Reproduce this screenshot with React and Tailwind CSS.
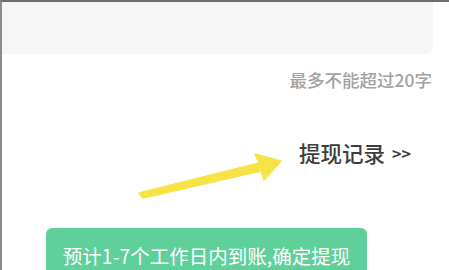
import React from 'react';

const cjk = { fontFamily: '"Noto Sans CJK SC", "Noto Sans", sans-serif' };

function Arrow() {
  // yellow annotation arrow pointing at the record link
  return (
    <svg className="absolute left-0 top-0" width="449" height="270" viewBox="0 0 449 270">
      <polygon
        points="137,191 257,161 253,152 279,159 262,178 259,169 141,196"
        fill="#f6e447"
        stroke="#f6e447"
        strokeWidth="1.5"
        strokeLinejoin="round"
      />
    </svg>
  );
}

export default function App() {
  return (
    <div
      className="relative w-[449px] h-[270px] overflow-hidden bg-white border-t-2 border-l-2 border-t-[#6e6e6e] border-l-[#8c8c8c]"
      style={cjk}
    >
      <div className="h-[52px] mr-[16px] bg-[#f6f6f6] rounded-br-lg" />

      <div className="mt-[14px] pr-[17px] text-right text-[17.5px] leading-[24px] font-medium text-[#a2a2a2]">
        最多不能超过20字
      </div>

      <div className="mt-[47px] pr-[38px] flex justify-end items-center h-[28px]">
        <span className="text-[21.5px] leading-[28px] font-medium text-[#3d3d3d]">提现记录</span>
        <span className="ml-[7px] text-[16px] font-bold text-[#3d3d3d]">&gt;&gt;</span>
      </div>

      <div className="mt-[61px] ml-[44px] w-[321px] h-[55px] rounded-md bg-[#60d09b] flex items-center justify-center">
        <span className="text-[19.5px] text-white">预计1-7个工作日内到账,确定提现</span>
      </div>

      <Arrow />
    </div>
  );
}
